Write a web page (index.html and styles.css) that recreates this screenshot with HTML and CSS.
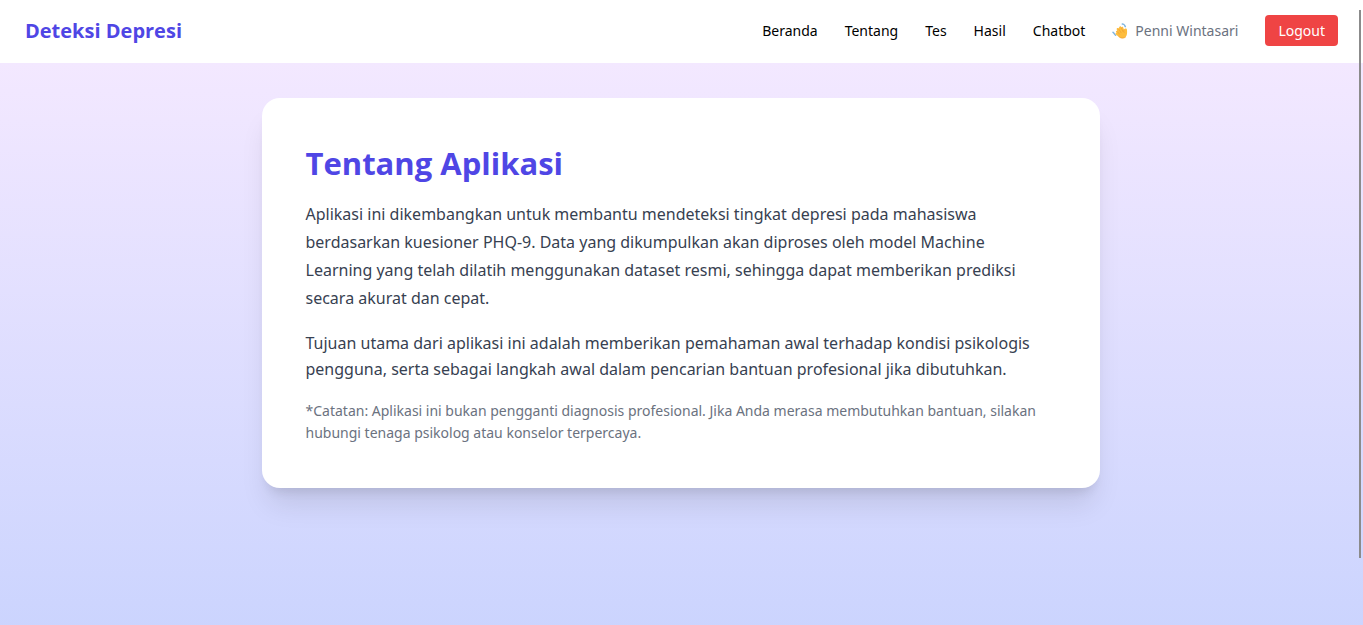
FILE: index.html
```html
<!DOCTYPE html>
<html lang="id">
<head>
<meta charset="utf-8">
<meta name="viewport" content="width=device-width, initial-scale=1">
<title>Deteksi Depresi</title>
<link rel="stylesheet" href="styles.css">
</head>
<body>
<header class="navbar">
  <a class="brand" href="#">Deteksi Depresi</a>
  <nav class="menu">
    <a class="link" href="#">Beranda</a>
    <a class="link" href="#">Tentang</a>
    <a class="link" href="#">Tes</a>
    <a class="link" href="#">Hasil</a>
    <a class="link" href="#">Chatbot</a>
    <span class="user">
      <svg class="wave" viewBox="0 0 16 16" aria-hidden="true">
        <path d="M1 9.200l1.200 1.300M2.600 11.300l1 .9M10.300 1l1.500.4M12.600 2.300l.7 1.400" fill="none" stroke="#7fb6e2" stroke-width="1.500" stroke-linecap="round"/>
        <path d="M5.300 8.600L4.700 6.200C4.500 5 6 4.600 6.500 5.600L7.300 3.900C8 2.800 9.300 3.400 9.300 4.400C10 3.400 11.300 3.900 11.400 5L12 6.800C12.500 5.200 14.900 5.100 15 7C15.200 9.500 15.300 12.700 13.400 14.300C11.300 15.800 8.600 15.200 7 13.900L3.900 11.500C3 10.600 3.700 9.500 4.700 10L4 8.700C3.700 7.700 4.700 7.400 5.300 8.600Z" fill="#fdbd3e"/>
        <path d="M5.300 8.600l2.200 2.500M6.600 6l2.500 3.700M9.300 4.700l1.600 3.800M12 6.800c-.5 1-.4 1.900.1 2.700M7 13.900c2.300 1.600 4.500 1.600 6.400.4" fill="none" stroke="#ee9b2e" stroke-width=".6" stroke-linecap="round"/>
      </svg>
      <span>Penni Wintasari</span>
    </span>
    <button class="logout" type="button">Logout</button>
  </nav>
</header>
<main class="page">
  <article class="card">
    <h1 class="title">Tentang Aplikasi</h1>
    <p class="lead">Aplikasi ini dikembangkan untuk membantu mendeteksi tingkat depresi pada mahasiswa berdasarkan kuesioner PHQ-9. Data yang dikumpulkan akan diproses oleh model Machine Learning yang telah dilatih menggunakan dataset resmi, sehingga dapat memberikan prediksi secara akurat dan cepat.</p>
    <p class="text">Tujuan utama dari aplikasi ini adalah memberikan pemahaman awal terhadap kondisi psikologis pengguna, serta sebagai langkah awal dalam pencarian bantuan profesional jika dibutuhkan.</p>
    <p class="note">*Catatan: Aplikasi ini bukan pengganti diagnosis profesional. Jika Anda merasa membutuhkan bantuan, silakan hubungi tenaga psikolog atau konselor terpercaya.</p>
  </article>
</main>
<div class="scroll-thumb" aria-hidden="true"></div>
</body>
</html>
```
FILE: styles.css
```css
* { box-sizing: border-box; }
body {
  margin: 0;
  min-height: 100vh;
  display: flex;
  flex-direction: column;
  font-family: "Segoe UI", "Noto Sans", "Open Sans", sans-serif;
  font-size: 16px;
  color: #000;
}
.navbar {
  flex: none;
  display: flex;
  align-items: center;
  justify-content: space-between;
  padding: 15px 25px 17px;
  background: #fff;
}
.brand {
  font-family: "Segoe UI", "Open Sans", "Noto Sans", sans-serif;
  font-size: 20px;
  line-height: 31px;
  font-weight: 700;
  color: #4f46e5;
  text-decoration: none;
}
.menu {
  display: flex;
  align-items: center;
  gap: 27px;
  font-size: 14px;
  line-height: 22px;
}
.link { color: #000; text-decoration: none; }
.user {
  display: flex;
  align-items: center;
  gap: 7px;
  color: #6b7280;
}
.wave { width: 16px; height: 16px; }
.logout {
  border: 0;
  border-radius: 4px;
  padding: 5px 13px 4px;
  background: #ef4444;
  color: #fff;
  font: inherit;
}
.page {
  flex: 1;
  padding: 35px 26px 35px 24px;
  background: linear-gradient(to bottom, #f3e8ff, #c7d2fe) 0 0 / 100% 100vh;
}
.card {
  max-width: 838px;
  margin: 0 auto;
  padding: 44px;
  border-radius: 18px;
  background: #fff;
  box-shadow: 0 22px 28px -6px rgba(0, 0, 0, .1), 0 9px 11px -6px rgba(0, 0, 0, .1);
}
.title {
  margin: 0 0 16px;
  font-family: "Segoe UI", "Open Sans", "Noto Sans", sans-serif;
  font-size: 31px;
  line-height: 42px;
  font-weight: 700;
  color: #4f46e5;
}
.lead, .text { margin: 0 0 18px; color: #374151; }
.lead { line-height: 28px; }
.text { line-height: 26px; }
.note {
  margin: 0;
  font-size: 14px;
  line-height: 22px;
  color: #6b7280;
}
.scroll-thumb {
  position: fixed;
  top: 10px;
  right: 2px;
  bottom: 67px;
  width: 2px;
  background: #8b8b8b;
}
```
